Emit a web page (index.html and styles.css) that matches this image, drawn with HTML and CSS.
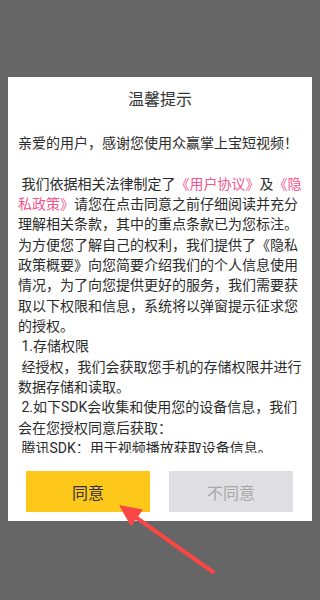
FILE: index.html
```html
<!DOCTYPE html>
<html lang="zh">
<head>
<meta charset="utf-8">
<title>温馨提示</title>
<link rel="stylesheet" href="styles.css">
</head>
<body>
<div class="page">
  <div class="under-text"><span class="u1">同意并继续</span><span class="u2">暂不同意并退出</span></div>
</div>
<div class="dialog">
  <div class="dialog-head">温馨提示</div>
  <div class="dialog-body">
    <p class="txt">亲爱的用户，感谢您使用众赢掌上宝短视频！<br><br>&nbsp;我们依据相关法律制定了<span class="link">《用户协议》</span>及<span class="link">《隐<br>私政策》</span>请您在点击同意之前仔细阅读并充分<br>理解相关条款，其中的重点条款已为您标注。<br>为方便您了解自己的权利，我们提供了《隐私<br>政策概要》向您简要介绍我们的个人信息使用<br>情况，为了向您提供更好的服务，我们需要获<br>取以下权限和信息，系统将以弹窗提示征求您<br>的授权。<br>&nbsp;1.存储权限<br>&nbsp;经授权，我们会获取您手机的存储权限并进行<br>数据存储和读取。<br>&nbsp;2.如下SDK会收集和使用您的设备信息，我们<br>会在您授权同意后获取：<br>&nbsp;腾讯SDK：用于视频播放获取设备信息。<br>&nbsp;友盟SDK：用于统计分析获取设备信息。</p>
  </div>
  <div class="dialog-foot">
    <button class="btn btn-agree">同意</button>
    <button class="btn btn-deny">不同意</button>
  </div>
</div>
<svg class="arrow" width="320" height="600" viewBox="0 0 320 600">
  <line x1="213" y1="572" x2="134" y2="516" stroke="#fb4646" stroke-width="4" stroke-linecap="round"/>
  <polygon points="119,505 143,509.5 131,526.5" fill="#fb4646"/>
</svg>
</body>
</html>
```
FILE: styles.css
```css
html, body {
  margin: 0;
  padding: 0;
}
body {
  width: 320px;
  height: 600px;
  background: #666666;
  overflow: hidden;
  position: relative;
  font-family: Roboto, "Noto Sans CJK SC", sans-serif;
}
.page {
  height: 600px;
  padding-top: 504px;
  box-sizing: border-box;
}
.under-text {
  display: flex;
  font-size: 14px;
  line-height: 20px;
  color: #555555;
}
.u1 {
  margin-left: 73px;
  width: 36px;
  overflow: hidden;
  white-space: nowrap;
}
.u2 {
  margin-left: 56px;
  width: 80px;
  overflow: hidden;
  white-space: nowrap;
}
.dialog {
  position: absolute;
  left: 8px;
  top: 77px;
  width: 304px;
  height: 444px;
  background: #ffffff;
  display: flex;
  flex-direction: column;
}
.dialog-head {
  height: 56px;
  box-sizing: border-box;
  padding-top: 12px;
  font-size: 16px;
  line-height: 22px;
  text-align: center;
  color: #333333;
}
.dialog-body {
  height: 320px;
  overflow: hidden;
  padding: 0 10px;
}
.txt {
  margin: 0;
  font-size: 14px;
  line-height: 20.33px;
  color: #2b2b2b;
  white-space: nowrap;
}
.link {
  color: #f4558c;
}
.dialog-foot {
  display: flex;
  gap: 19px;
  padding: 18px 19px 9px 18px;
}
.btn {
  width: 124px;
  height: 41px;
  border: none;
  margin: 0;
  padding: 0;
  font-family: Roboto, "Noto Sans CJK SC", sans-serif;
  font-size: 16px;
}
.btn-agree {
  background: #fdc819;
  color: #333333;
}
.btn-deny {
  background: #dfdee3;
  color: #a8a8a8;
}
.arrow {
  position: absolute;
  left: 0;
  top: 0;
}
```
